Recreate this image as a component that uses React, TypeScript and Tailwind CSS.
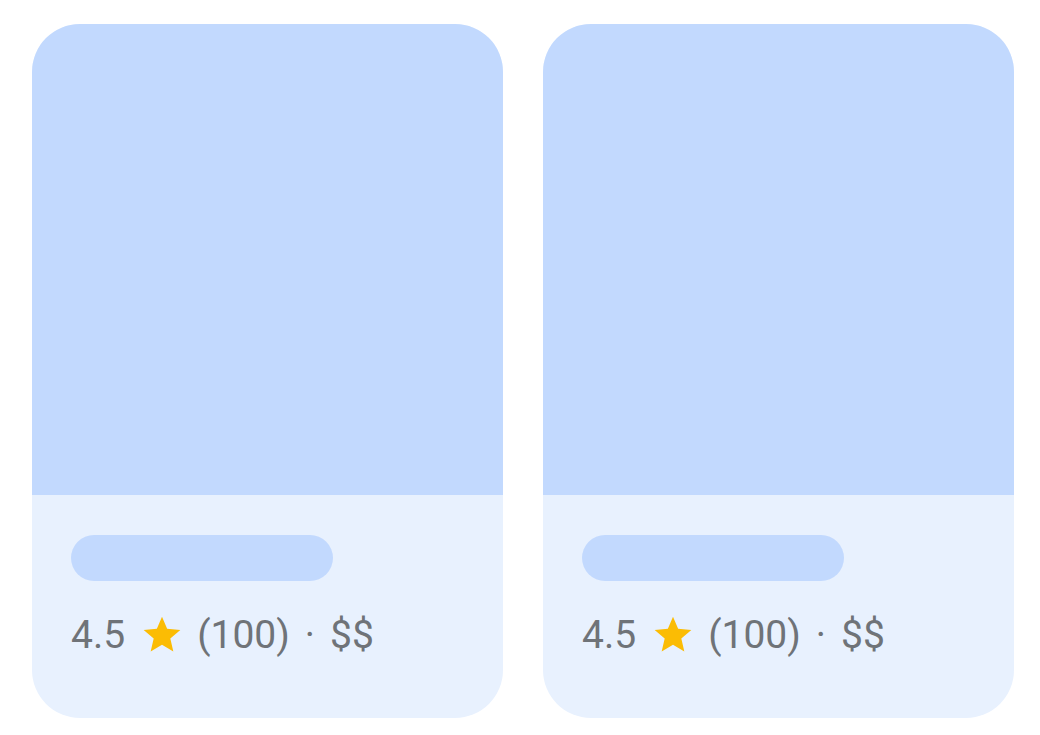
function Star() {
  return (
    <svg viewBox="0 0 24 24" className="w-[44px] h-[44px] shrink-0" fill="#fbbc04">
      <path d="M12 17.27L18.18 21l-1.64-7.03L22 9.24l-7.19-.61L12 2 9.19 8.63 2 9.24l5.46 4.73L5.82 21z" />
    </svg>
  )
}

function SkeletonCard() {
  return (
    <div className="w-[471px] h-[694px] rounded-[48px] overflow-hidden bg-[#e8f1fe] flex flex-col">
      <div className="w-full h-[471px] bg-[#c2d9fe]" />
      <div className="px-[39px] pt-[40px]">
        <div className="w-[262px] h-[46px] rounded-full bg-[#c2d9fe]" />
        <div className="flex items-center mt-[32px] text-[39px] leading-none text-[#6f7378]" style={{ fontFamily: 'Roboto, sans-serif' }}>
          <span>4.5</span>
          <span className="ml-[15px]"><Star /></span>
          <span className="ml-[13px]">(100)</span>
          <span className="ml-[15px]">·</span>
          <span className="ml-[15px]">$$</span>
        </div>
      </div>
    </div>
  )
}

export default function App() {
  return (
    <div className="w-[1040px] h-[735px] bg-white flex gap-[40px] pl-[32px] pt-[24px]">
      <SkeletonCard />
      <SkeletonCard />
    </div>
  )
}
